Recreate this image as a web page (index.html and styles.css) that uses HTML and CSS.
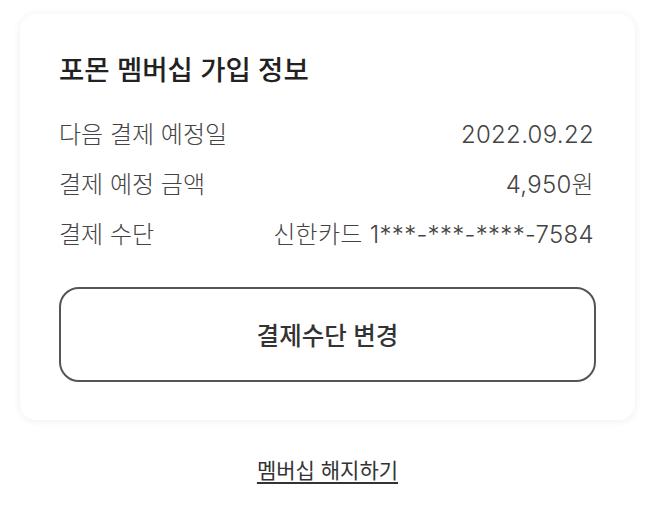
FILE: index.html
```html
<!DOCTYPE html>
<html lang="ko">
<head>
    <meta charset="UTF-8">
    <meta name="viewport" content="width=device-width, initial-scale=1.0">
    <title>포몬 멤버십 가입 정보</title>
    <link rel="stylesheet" href="styles.css">
</head>
<body>
    <section class="card">
        <h2 class="card-title">포몬 멤버십 가입 정보</h2>
        <div class="info-row">
            <span class="label">다음 결제 예정일</span>
            <span class="value">2022.09.22</span>
        </div>
        <div class="info-row">
            <span class="label">결제 예정 금액</span>
            <span class="value">4,950원</span>
        </div>
        <div class="info-row">
            <span class="label">결제 수단</span>
            <span class="value">신한카드 1***-***-****-7584</span>
        </div>
        <button class="change-button">결제수단 변경</button>
    </section>

    <div class="footer">
        <a href="#" class="cancel-link">멤버십 해지하기</a>
    </div>
</body>
</html>
```

FILE: styles.css
```css
body {
    margin: 0;
    padding: 14px 16px 0 20px;
    background-color: #fff;
    font-family: Inter, "Noto Sans CJK KR", sans-serif;
    color: #333;
}

.card {
    background-color: #fff;
    border-radius: 16px;
    padding: 38px 39px;
    box-shadow: 0 1px 8px rgba(0, 0, 0, 0.07);
}

.card-title {
    margin: 0 0 22px;
    font-size: 27.5px;
    line-height: 36px;
    font-weight: 500;
    color: #222;
}

.info-row {
    display: flex;
    justify-content: space-between;
    align-items: center;
    padding-right: 2px;
    font-size: 24px;
    line-height: 50px;
    font-weight: 300;
    color: #444;
}

.info-row .value {
    letter-spacing: 0.3px;
}

.change-button {
    display: block;
    width: 100%;
    height: 95px;
    margin-top: 27px;
    border: 2px solid #555;
    border-radius: 20px;
    background-color: #fff;
    font-family: inherit;
    font-size: 24.5px;
    font-weight: 500;
    color: #333;
    cursor: pointer;
}

.footer {
    margin-top: 36px;
    text-align: center;
    line-height: 30px;
}

.cancel-link {
    font-size: 21px;
    color: #333;
    text-decoration: underline;
    text-underline-offset: 4px;
}
```
